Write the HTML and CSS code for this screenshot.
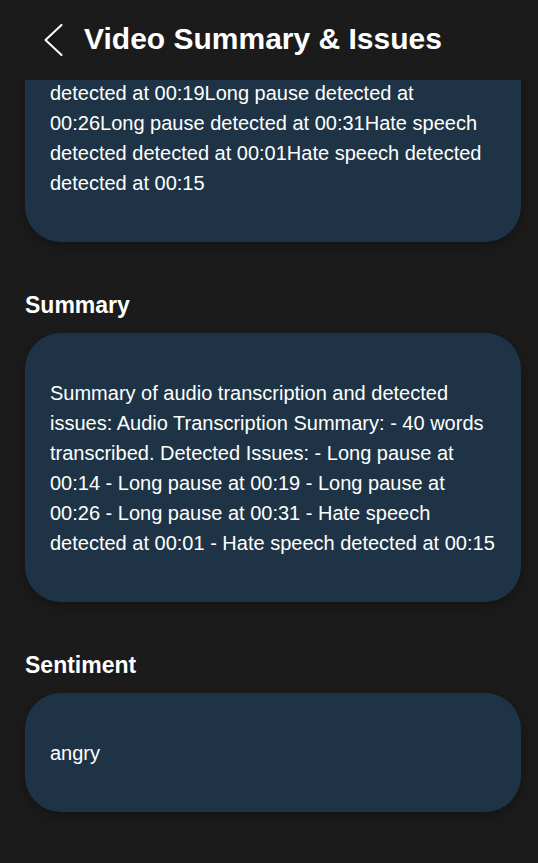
FILE: index.html
```html
<!DOCTYPE html>
<html lang="en">
<head>
<meta charset="utf-8">
<title>Video Summary &amp; Issues</title>
<link rel="stylesheet" href="styles.css">
</head>
<body>
<div class="app">
  <header class="topbar">
    <button class="back" aria-label="Back">
      <svg width="19" height="32" viewBox="0 0 19 32" aria-hidden="true">
        <polyline points="17.5,1 1.5,16 17.5,31" fill="none" stroke="#ffffff" stroke-width="2" stroke-linecap="round" stroke-linejoin="round"/>
      </svg>
    </button>
    <h1 class="title">Video Summary &amp; Issues</h1>
  </header>
  <main class="content" id="content">
    <section class="section">
      <h2 class="section-title">Issues</h2>
      <div class="card">
        <p class="card-text">Long pause detected at 00:14Long pause detected at 00:19Long pause detected at 00:26Long pause detected at 00:31Hate speech detected detected at 00:01Hate speech detected detected at 00:15</p>
      </div>
    </section>
    <section class="section">
      <h2 class="section-title">Summary</h2>
      <div class="card">
        <p class="card-text">Summary of audio transcription and detected issues: Audio Transcription Summary: - 40 words transcribed. Detected Issues: - Long pause at 00:14 - Long pause at 00:19 - Long pause at 00:26 - Long pause at 00:31 - Hate speech detected at 00:01 - Hate speech detected at 00:15</p>
      </div>
    </section>
    <section class="section">
      <h2 class="section-title">Sentiment</h2>
      <div class="card">
        <p class="card-text">angry</p>
      </div>
    </section>
  </main>
</div>
<script src="script.js"></script>
</body>
</html>
```

FILE: styles.css
```css
* {
  box-sizing: border-box;
}

html, body {
  margin: 0;
  padding: 0;
  height: 100%;
  background: #1b1b1b;
  color: #ffffff;
  font-family: "Liberation Sans", Arial, sans-serif;
}

.app {
  height: 100vh;
  display: flex;
  flex-direction: column;
  overflow: hidden;
}

.topbar {
  flex: 0 0 80px;
  display: flex;
  align-items: center;
  gap: 21px;
  padding-left: 44px;
  background: #1b1b1b;
  position: relative;
  z-index: 2;
}

.back {
  display: flex;
  align-items: center;
  justify-content: center;
  padding: 0;
  margin: 0;
  border: 0;
  background: transparent;
  width: 19px;
  height: 32px;
  margin-top: -1px;
}

.title {
  margin: 0;
  font-size: 30px;
  font-weight: 700;
  line-height: 34px;
  color: #ffffff;
  margin-top: -3px;
}

.content {
  flex: 1 1 auto;
  overflow-y: auto;
  scrollbar-width: none;
  padding: 20px 17px 60px 25px;
  display: flex;
  flex-direction: column;
  gap: 50px;
}

.content::-webkit-scrollbar {
  display: none;
}

.section {
  display: flex;
  flex-direction: column;
  gap: 14px;
  flex: 0 0 auto;
}

.section-title {
  margin: 0;
  font-size: 23px;
  line-height: 27px;
  font-weight: 700;
  color: #ffffff;
}

.card {
  background: #1e3446;
  border-radius: 36px;
  padding: 45px 25px 44px;
  box-shadow: 0 4px 12px rgba(0, 0, 0, 0.28);
}

.card-text {
  margin: 0;
  font-size: 20px;
  line-height: 30px;
  color: #ffffff;
}
```

FILE: script.js
```js
(function () {
  var el = document.getElementById('content');
  function setScroll() { el.scrollTop = 138; }
  setScroll();
  window.addEventListener('load', setScroll);
})();
```
